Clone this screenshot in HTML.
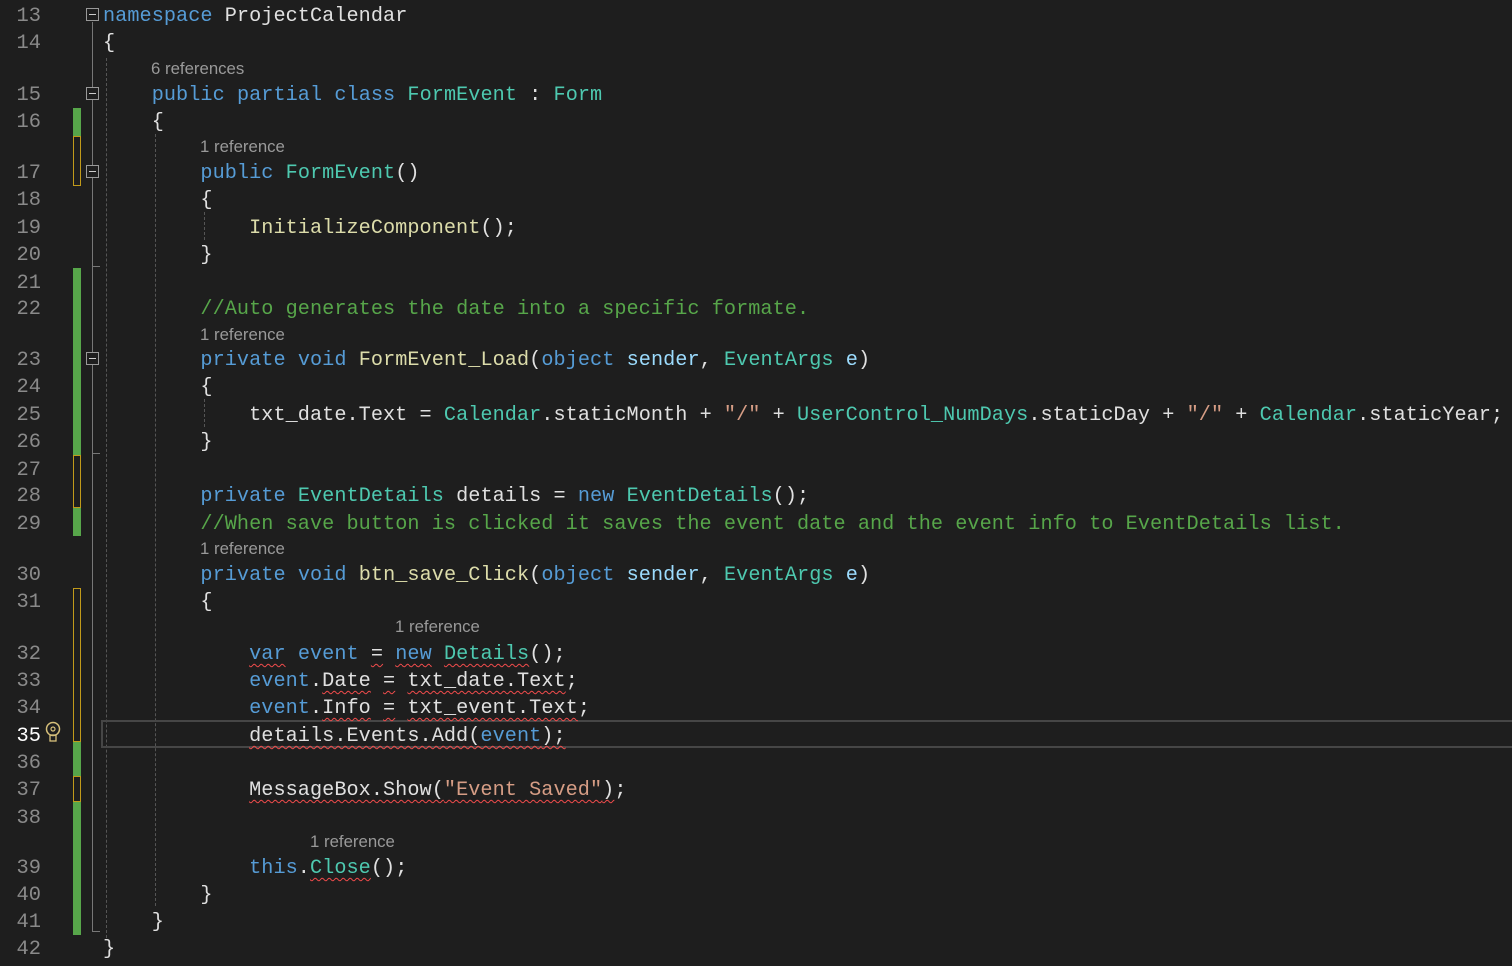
<!DOCTYPE html>
<html><head><meta charset="utf-8"><style>
body{margin:0;width:1512px;height:966px;background:#1e1e1e;overflow:hidden;position:relative;font-family:"Liberation Mono",monospace;}
.l{position:absolute;left:103px;height:27px;line-height:27px;font-size:20.2px;letter-spacing:0.06px;color:#e0e0e0;white-space:pre;margin-top:2px;}
.n{position:absolute;left:0;width:41px;text-align:right;height:27px;line-height:27px;font-size:20.4px;color:#8a8a8a;font-family:"Liberation Mono",monospace;margin-top:2px;}
.r{position:absolute;font-family:"Liberation Sans",sans-serif;font-size:16.8px;color:#999;height:20px;line-height:20px;white-space:pre;margin-top:2px;}
.k{color:#569cd6}.t{color:#4ec9b0}.m{color:#dcdcaa}.c{color:#57a64a}.s{color:#d69d85}.p{color:#9cdcfe}
.w{text-decoration:underline wavy #f14c4c;text-decoration-thickness:1px;text-underline-offset:4px}
.g{position:absolute;left:73px;width:8px;background:#57a64a}
.y{position:absolute;left:73px;width:6px;border:1px solid #c09a1a}
.fb{position:absolute;left:86px;width:11px;height:11px;border:1px solid #999;background:#1e1e1e}
.fb:after{content:"";position:absolute;left:2px;top:5px;width:7px;height:1px;background:#ccc}
.dv{position:absolute;width:0;border-left:1px dashed #555}
</style></head><body>
<div style="position:absolute;left:92px;top:22px;width:1px;height:910px;background:#777"></div>
<div style="position:absolute;left:92px;top:931px;width:8px;height:1px;background:#777"></div>
<div style="position:absolute;left:92px;top:266px;width:8px;height:1px;background:#777"></div>
<div style="position:absolute;left:92px;top:453px;width:8px;height:1px;background:#777"></div>
<div class="fb" style="top:8px"></div>
<div class="fb" style="top:87px"></div>
<div class="fb" style="top:165px"></div>
<div class="fb" style="top:352px"></div>
<div class="dv" style="left:106px;top:58px;height:880px"></div>
<div class="dv" style="left:155px;top:134px;height:772px"></div>
<div class="dv" style="left:204px;top:212px;height:28px"></div>
<div class="dv" style="left:204px;top:399px;height:28px"></div>
<div class="g" style="top:108px;height:28px"></div>
<div class="y" style="top:136px;height:48px"></div>
<div class="g" style="top:268px;height:187px"></div>
<div class="y" style="top:455px;height:51px"></div>
<div class="g" style="top:508px;height:28px"></div>
<div class="y" style="top:588px;height:152px"></div>
<div class="g" style="top:742px;height:34px"></div>
<div class="y" style="top:776px;height:24px"></div>
<div class="g" style="top:802px;height:133px"></div>
<div style="position:absolute;left:101px;top:720px;width:1420px;height:24px;border:2px solid #464646"></div>
<svg style="position:absolute;left:43px;top:721px" width="20" height="24" viewBox="0 0 20 24"><circle cx="10" cy="8" r="6.5" fill="none" stroke="#d7c07a" stroke-width="1.5"/><circle cx="10" cy="8" r="2" fill="none" stroke="#d7c07a" stroke-width="1.2"/><rect x="7" y="14" width="6" height="6" fill="none" stroke="#d7c07a" stroke-width="1.3"/></svg>

<div class="n" style="top:1px">13</div><div class="l" style="top:1px"><span class="k">namespace</span> ProjectCalendar</div>
<div class="n" style="top:28px">14</div><div class="l" style="top:28px">{</div>
<div class="r" style="left:151px;top:57px">6 references</div>
<div class="n" style="top:80px">15</div><div class="l" style="top:80px">    <span class="k">public</span> <span class="k">partial</span> <span class="k">class</span> <span class="t">FormEvent</span> : <span class="t">Form</span></div>
<div class="n" style="top:107px">16</div><div class="l" style="top:107px">    {</div>
<div class="r" style="left:200px;top:135px">1 reference</div>
<div class="n" style="top:158px">17</div><div class="l" style="top:158px">        <span class="k">public</span> <span class="t">FormEvent</span>()</div>
<div class="n" style="top:185px">18</div><div class="l" style="top:185px">        {</div>
<div class="n" style="top:213px">19</div><div class="l" style="top:213px">            <span class="m">InitializeComponent</span>();</div>
<div class="n" style="top:240px">20</div><div class="l" style="top:240px">        }</div>
<div class="n" style="top:268px">21</div>
<div class="n" style="top:294px">22</div><div class="l" style="top:294px">        <span class="c">//Auto generates the date into a specific formate.</span></div>
<div class="r" style="left:200px;top:323px">1 reference</div>
<div class="n" style="top:345px">23</div><div class="l" style="top:345px">        <span class="k">private</span> <span class="k">void</span> <span class="m">FormEvent_Load</span>(<span class="k">object</span> <span class="p">sender</span>, <span class="t">EventArgs</span> <span class="p">e</span>)</div>
<div class="n" style="top:372px">24</div><div class="l" style="top:372px">        {</div>
<div class="n" style="top:400px">25</div><div class="l" style="top:400px">            txt_date.Text = <span class="t">Calendar</span>.staticMonth + <span class="s">"/"</span> + <span class="t">UserControl_NumDays</span>.staticDay + <span class="s">"/"</span> + <span class="t">Calendar</span>.staticYear;</div>
<div class="n" style="top:427px">26</div><div class="l" style="top:427px">        }</div>
<div class="n" style="top:455px">27</div>
<div class="n" style="top:481px">28</div><div class="l" style="top:481px">        <span class="k">private</span> <span class="t">EventDetails</span> details = <span class="k">new</span> <span class="t">EventDetails</span>();</div>
<div class="n" style="top:509px">29</div><div class="l" style="top:509px">        <span class="c">//When save button is clicked it saves the event date and the event info to EventDetails list.</span></div>
<div class="r" style="left:200px;top:537px">1 reference</div>
<div class="n" style="top:560px">30</div><div class="l" style="top:560px">        <span class="k">private</span> <span class="k">void</span> <span class="m">btn_save_Click</span>(<span class="k">object</span> <span class="p">sender</span>, <span class="t">EventArgs</span> <span class="p">e</span>)</div>
<div class="n" style="top:587px">31</div><div class="l" style="top:587px">        {</div>
<div class="r" style="left:395px;top:615px">1 reference</div>
<div class="n" style="top:639px">32</div><div class="l" style="top:639px">            <span class="k w">var</span> <span class="k">event</span> <span class="w">=</span> <span class="k w">new</span> <span class="t w">Details</span>();</div>
<div class="n" style="top:666px">33</div><div class="l" style="top:666px">            <span class="k">event</span>.<span class="w">Date</span> <span class="w">=</span> <span class="w">txt_date.Text</span>;</div>
<div class="n" style="top:693px">34</div><div class="l" style="top:693px">            <span class="k">event</span>.<span class="w">Info</span> <span class="w">=</span> <span class="w">txt_event.Text</span>;</div>
<div class="n" style="top:721px;color:#fff">35</div><div class="l" style="top:721px">            <span class="w">details.Events.Add(<span class="k">event</span>);</span></div>
<div class="n" style="top:748px">36</div>
<div class="n" style="top:775px">37</div><div class="l" style="top:775px">            <span class="w">MessageBox.Show(<span class="s">"Event Saved"</span>)</span>;</div>
<div class="n" style="top:803px">38</div>
<div class="r" style="left:310px;top:830px">1 reference</div>
<div class="n" style="top:853px">39</div><div class="l" style="top:853px">            <span class="k">this</span>.<span class="t w">Close</span>();</div>
<div class="n" style="top:880px">40</div><div class="l" style="top:880px">        }</div>
<div class="n" style="top:907px">41</div><div class="l" style="top:907px">    }</div>
<div class="n" style="top:934px">42</div><div class="l" style="top:934px">}</div>
</body></html>
